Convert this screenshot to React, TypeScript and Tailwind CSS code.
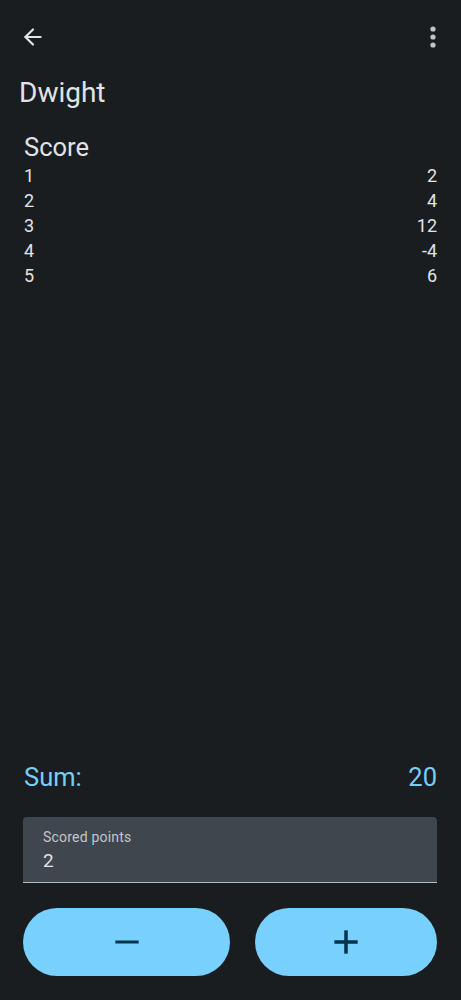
import { ArrowLeft, Minus, Plus } from "lucide-react";

const scores = [
    { round: 1, points: 2 },
    { round: 2, points: 4 },
    { round: 3, points: 12 },
    { round: 4, points: -4 },
    { round: 5, points: 6 },
];

export default function App() {
    const sum = scores.reduce((acc, s) => acc + s.points, 0);

    return (
        <div className="h-screen w-full bg-[#1a1d20] text-[#e1e3e6] flex flex-col font-['Roboto',sans-serif]">
            {/* top bar */}
            <div className="flex items-center justify-between h-[74px] pl-[20px] pr-[20px]">
                <ArrowLeft size={26} strokeWidth={2} className="text-[#e1e3e6]" />
                <svg width="16" height="24" viewBox="0 0 16 24" className="text-[#c2c7cc]" fill="currentColor">
                    <circle cx="8" cy="4" r="2.6" />
                    <circle cx="8" cy="12" r="2.6" />
                    <circle cx="8" cy="20" r="2.6" />
                </svg>
            </div>

            <h1 className="mt-[3px] pl-[19px] text-[28px] leading-[32px]">Dwight</h1>

            <div className="mt-[22px] px-6">
                <h2 className="text-[25.5px] leading-[32px]">Score</h2>
                <div className="flex flex-col">
                    {scores.map((s) => (
                        <div key={s.round} className="flex justify-between text-[18px] leading-[25px]">
                            <span>{s.round}</span>
                            <span>{s.points}</span>
                        </div>
                    ))}
                </div>
            </div>

            <div className="flex-1" />

            <div className="px-6 pb-6">
                <div className="flex justify-between text-[25.5px] leading-[30px] text-[#78cdf8]">
                    <span>Sum:</span>
                    <span>{sum}</span>
                </div>

                <div className="mt-[25px] -ml-px h-[66px] bg-[#40464e] rounded-t-[4px] border-b border-[#b8bcc1] pl-[20px] pt-[12px]">
                    <div className="text-[14px] leading-[16px] text-[#c0c5cb] tracking-[0.2px]">Scored points</div>
                    <div className="mt-[4px] text-[19px] leading-[24px] text-[#e1e3e6]">2</div>
                </div>

                <div className="mt-[25px] -ml-px flex gap-[25px]">
                    <button className="flex-[207] h-[68px] rounded-full bg-[#78d0fe] flex items-center justify-center">
                        <Minus size={40} strokeWidth={1.8} strokeLinecap="butt" className="text-[#00354b]" />
                    </button>
                    <button className="flex-[182] h-[68px] rounded-full bg-[#78d0fe] flex items-center justify-center">
                        <Plus size={40} strokeWidth={2.1} strokeLinecap="butt" className="text-[#00354b]" />
                    </button>
                </div>
            </div>
        </div>
    );
}
